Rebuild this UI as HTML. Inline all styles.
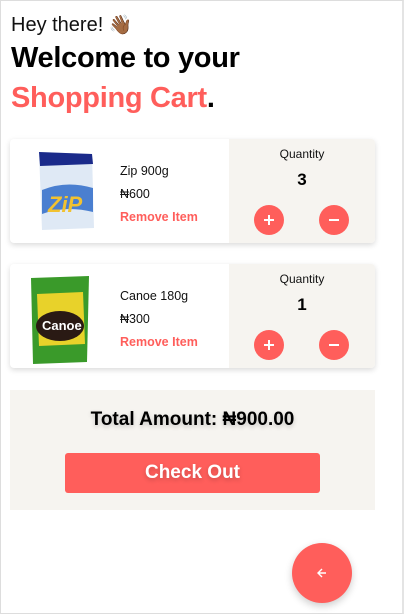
<!DOCTYPE html>
<html><head><meta charset="utf-8"><style>
*{margin:0;padding:0;box-sizing:border-box}
body{width:404px;height:614px;background:#fff;font-family:"Liberation Sans",sans-serif;position:relative;overflow:hidden}
.frame{position:absolute;left:0;top:0;width:404px;height:614px;border:1px solid #ddd;border-right:2px solid #e4e4e4}
.hey{position:absolute;left:11px;top:13px;font-size:20px;color:#111}
.h1{position:absolute;left:11px;font-size:29px;font-weight:bold;letter-spacing:-0.3px}
.red{color:#ff5e5b}
.card{position:absolute;left:10px;width:365px;height:104px;border-radius:4px;background:#fff;box-shadow:0 2px 6px rgba(0,0,0,.15);overflow:hidden}
.right{position:absolute;left:219px;top:0;width:146px;height:104px;background:#f6f4f0;text-align:center}
.q{font-size:12px;margin-top:8px;color:#111}
.n{font-size:17px;font-weight:bold;margin-top:9px}
.btn{position:absolute;top:66px;width:30px;height:30px;border-radius:50%;background:#ff5e5b}
.btn svg{position:absolute;left:8px;top:8px}
.name{position:absolute;left:110px;font-size:12.5px;color:#111}
.rm{position:absolute;left:110px;font-size:12.5px;font-weight:bold;color:#ff5e5b}
.total{position:absolute;left:10px;top:390px;width:365px;height:120px;background:#f6f4f0;text-align:center}
.tt{font-size:19px;font-weight:bold;margin-top:19px;text-shadow:0 2px 5px rgba(0,0,0,.2)}
.co{position:absolute;left:55px;top:63px;width:255px;height:40px;border-radius:3px;background:#ff5e5b;color:#fff;font-weight:bold;font-size:19px;line-height:40px;text-shadow:0 2px 5px rgba(0,0,0,.2)}
.fab{position:absolute;left:292px;top:543px;width:60px;height:60px;border-radius:50%;background:#ff5e5b;box-shadow:0 3px 8px rgba(0,0,0,.2)}
</style></head><body>
<div class="frame"></div>
<div class="hey">Hey there! <span style="font-size:19px">👋🏾</span></div>
<div class="h1" style="top:42px">Welcome to your</div>
<div class="h1" style="top:82px"><span class="red">Shopping Cart</span>.</div>

<div class="card" style="top:139px">
<svg style="position:absolute;left:26px;top:11px" width="60" height="82" viewBox="0 0 60 82">
<path d="M3 2 L56 4 L58 78 L6 80 Z" fill="#dfe9f5"/>
<path d="M3 2 L56 4 L57 14 L4 16 Z" fill="#1a2a8a"/>
<path d="M6 40 Q30 30 57 38 L57 62 Q30 55 6 64 Z" fill="#4a7fd0"/>
<text x="12" y="62" font-size="22" font-weight="bold" fill="#f2c230" font-family="Liberation Sans" font-style="italic">ZiP</text>
</svg>
<div class="name" style="top:25px">Zip 900g</div>
<div class="name" style="top:48px">₦600</div>
<div class="rm" style="top:71px">Remove Item</div>
<div class="right"><div class="q">Quantity</div><div class="n">3</div>
<div class="btn" style="left:25px"><svg width="14" height="14"><path d="M7 2V12M2 7H12" stroke="#fff" stroke-width="2"/></svg></div>
<div class="btn" style="left:90px"><svg width="14" height="14"><path d="M2 7H12" stroke="#fff" stroke-width="2"/></svg></div></div>
</div>

<div class="card" style="top:264px">
<svg style="position:absolute;left:19px;top:10px" width="62" height="92" viewBox="0 0 62 92">
<path d="M2 4 L60 2 L58 88 L4 90 Z" fill="#3a9a2a"/>
<path d="M8 20 L54 18 L56 70 L10 72 Z" fill="#e8d22a"/>
<ellipse cx="31" cy="52" rx="24" ry="15" fill="#2a1a14"/>
<text x="13" y="56" font-size="13" font-weight="bold" fill="#fff" font-family="Liberation Sans">Canoe</text>
</svg>
<div class="name" style="top:25px">Canoe 180g</div>
<div class="name" style="top:48px">₦300</div>
<div class="rm" style="top:71px">Remove Item</div>
<div class="right"><div class="q">Quantity</div><div class="n">1</div>
<div class="btn" style="left:25px"><svg width="14" height="14"><path d="M7 2V12M2 7H12" stroke="#fff" stroke-width="2"/></svg></div>
<div class="btn" style="left:90px"><svg width="14" height="14"><path d="M2 7H12" stroke="#fff" stroke-width="2"/></svg></div></div>
</div>

<div class="total"><div class="tt">Total Amount: ₦900.00</div><div class="co">Check Out</div></div>
<div class="fab"><svg style="position:absolute;left:24px;top:24px" width="12" height="12"><path d="M10 6H2M6 2L2 6L6 10" stroke="#fff" stroke-width="1.4" fill="none"/></svg></div>
</body></html>
